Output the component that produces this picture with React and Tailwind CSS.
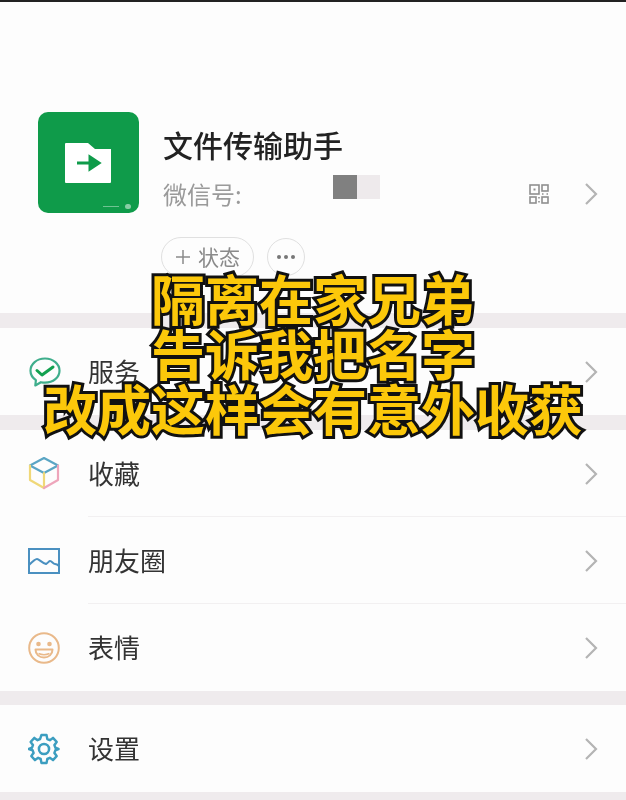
import { useState } from "react";

const font = "font-['Noto_Sans_CJK_SC','Noto_Sans',sans-serif]";

function Chevron({ className = "" }) {
  return (
    <svg width="14" height="24" viewBox="0 0 14 24" fill="none" stroke="#b4b4b4" strokeWidth="2.2" className={className}>
      <path d="M2 2l10 10L2 22" />
    </svg>
  );
}

function ServiceIcon() {
  return (
    <svg width="34" height="32" viewBox="0 0 34 32" fill="none">
      <path d="M17 2.500C8.700 2.500 2.500 8 2.500 14.700c0 3.900 2.100 7.200 5.400 9.400l-.6 5.400 5.600-3.300c1.300.3 2.700.5 4.100.5 8.300 0 14.500-5.500 14.500-12S25.300 2.500 17 2.500z" stroke="#3fae8c" strokeWidth="2.200" strokeLinejoin="round" />
      <path d="M9 14.500l5 4.500 11-8" stroke="#12a150" strokeWidth="3" strokeLinecap="round" strokeLinejoin="round" />
    </svg>
  );
}

function CubeIcon() {
  return (
    <svg width="32" height="34" viewBox="0 0 32 34" fill="none" strokeWidth="2.200" strokeLinejoin="round" strokeLinecap="round" className="-translate-y-[1px]">
      <path d="M2 9.500L16 2l14 7.500L16 17z" stroke="#5aa5c4" />
      <path d="M2 9.500V24l14 8V17" stroke="#f0d878" />
      <path d="M30 9.500V24l-14 8" stroke="#eea5bb" />
    </svg>
  );
}

function PictureIcon() {
  return (
    <svg width="32" height="26" viewBox="0 0 32 26" fill="none" stroke="#4a90c0" strokeWidth="2">
      <rect x="1" y="1" width="30" height="24" />
      <path d="M1 17c3-3 6-6 8-6s5 4 9 5c2-1 3-3 4-3 2 0 3 3 5 3 2 0 3 1 4 2" strokeLinejoin="round" />
    </svg>
  );
}

function SmileIcon() {
  return (
    <svg width="32" height="32" viewBox="0 0 32 32" fill="none">
      <circle cx="16" cy="16" r="14.800" stroke="#e9b98a" strokeWidth="2" />
      <circle cx="10.500" cy="12" r="2.300" fill="#e9b98a" />
      <circle cx="21.500" cy="12" r="2.300" fill="#e9b98a" />
      <path d="M7.500 17.500h17c0 5-3.800 8-8.500 8s-8.500-3-8.500-8z" stroke="#e9b98a" strokeWidth="2" strokeLinejoin="round" />
      <path d="M10.500 21.500c3 1.300 8 1.300 11 0" stroke="#e9b98a" strokeWidth="1.500" />
    </svg>
  );
}

function GearIcon() {
  return (
    <svg width="32" height="32" viewBox="0 0 24 24" fill="none" stroke="#3c9ec0" strokeWidth="1.900" strokeLinejoin="round">
      <path d="M10 1.500h4l.6 3 2 .9 2.500-1.700 2.900 3-1.800 2.400.8 2 2.500.9-2.500.9-.8 2 1.800 2.400-2.900 3-2.500-1.700-2 .9-.6 3h-4l-.6-3-2-.9-2.500 1.700-2.900-3 1.800-2.400-.8-2L0 12l2.500-.9.800-2L1.500 6.700l2.900-3 2.500 1.700 2-.9z" transform="translate(.6 0) scale(.95 1)" />
      <circle cx="12" cy="12" r="3.800" />
    </svg>
  );
}

function QrIcon() {
  return (
    <svg width="20" height="20" viewBox="0 0 20 20" fill="none" stroke="#8f8f8f" strokeWidth="1.600">
      <rect x="1" y="1" width="9" height="9" />
      <rect x="4.500" y="4.500" width="2" height="2" fill="#8f8f8f" stroke="none" />
      <rect x="13" y="1" width="6" height="6" />
      <rect x="1" y="13" width="6" height="6" />
      <rect x="13" y="13" width="6" height="6" />
      <path d="M13 10h1.500M17.500 10H19M10 13v1.500M10 17v1.500" />
    </svg>
  );
}

function Row({ icon, label, last }) {
  return (
    <div className="relative flex h-[87px] items-center pl-[28px] pr-[28px]">
      <div className="flex w-[60px] shrink-0 items-center">{icon}</div>
      <span className="-translate-y-[1px] text-[26px] leading-none text-[#333]">{label}</span>
      <Chevron className="ml-auto" />
      {!last ? <div className="absolute bottom-0 left-[88px] right-0 h-px bg-[#f2f0f1]" /> : null}
    </div>
  );
}

function Band({ h = "h-[15px]" }) {
  return <div className={`${h} bg-[#efebed]`} />;
}

export default function App() {
  const [lines] = useState(["隔离在家兄弟", "告诉我把名字", "改成这样会有意外收获"]);

  return (
    <div className={`relative h-[800px] w-[626px] overflow-hidden bg-[#fdfdfd] blur-[0.4px] ${font}`}>
      <div className="h-[2px] bg-[#222]" />

      <section className="flex h-[311px] flex-col pl-[38px] pr-[28px] pt-[110px]">
        <div className="flex">
          <div className="relative flex h-[101px] w-[101px] shrink-0 items-center justify-center rounded-[10px] bg-[#0f9b4a]">
            <svg width="46" height="40" viewBox="0 0 46 40" className="mr-[2px]">
              <path d="M0 1a1 1 0 011-1h22l7 6h16v33a1 1 0 01-1 1H1a1 1 0 01-1-1z" fill="#fff" />
              <path d="M12 20h13M25 14l9 6-9 6z" stroke="#0f9b4a" strokeWidth="3" fill="#0f9b4a" />
            </svg>
            <div className="absolute bottom-[4px] right-[8px] h-[5px] w-[6px] rounded-sm bg-white/50" />
            <div className="absolute bottom-[6px] right-[20px] h-px w-[16px] bg-white/40" />
          </div>
          <div className="ml-[24px] flex-1">
            <h1 className="mt-[13px] text-[30px] font-medium leading-[38px] text-[#222]">文件传输助手</h1>
            <div className="mt-[17px] flex h-[28px] items-center">
              <span className="w-[170px] text-[24px] leading-none text-[#9a9a9a]">微信号:</span>
              <div className="h-[24px] w-[24px] -translate-y-[7px] bg-[#808080]" />
              <div className="h-[24px] w-[23px] -translate-y-[7px] bg-[#eeeaec]" />
              <div className="ml-auto flex items-center gap-[35px]">
                <QrIcon />
                <Chevron />
              </div>
            </div>
          </div>
        </div>
        <div className="ml-[123px] mt-[24px] flex items-center gap-[13px]">
          <div className="flex h-[40px] w-[93px] items-center justify-center gap-[7px] rounded-full border border-[#e0e0e0] text-[21px] text-[#8a8a8a]">
            <svg width="16" height="16" viewBox="0 0 16 16" stroke="#8a8a8a" strokeWidth="1.500"><path d="M8 1v14M1 8h14" /></svg>
            状态
          </div>
          <div className="flex h-[38px] w-[38px] items-center justify-center gap-[3px] rounded-full border border-[#e0e0e0]">
            <span className="h-[4px] w-[4px] rounded-full bg-[#777]" />
            <span className="h-[4px] w-[4px] rounded-full bg-[#777]" />
            <span className="h-[4px] w-[4px] rounded-full bg-[#777]" />
          </div>
        </div>
      </section>

      <Band />
      <Row icon={<ServiceIcon />} label="服务" last />
      <Band />
      <Row icon={<CubeIcon />} label="收藏" />
      <Row icon={<PictureIcon />} label="朋友圈" />
      <Row icon={<SmileIcon />} label="表情" last />
      <Band h="h-[14px]" />
      <Row icon={<GearIcon />} label="设置" last />
      <Band h="h-[8px]" />

      <div className="absolute left-0 right-0 top-[270px] text-center">
        {lines.map((line) => (
          <div key={line} className="text-[54px] font-bold leading-[55px] text-[#fcc80a] [-webkit-text-stroke:6px_#111] [paint-order:stroke_fill]">
            {line}
          </div>
        ))}
      </div>
    </div>
  );
}
